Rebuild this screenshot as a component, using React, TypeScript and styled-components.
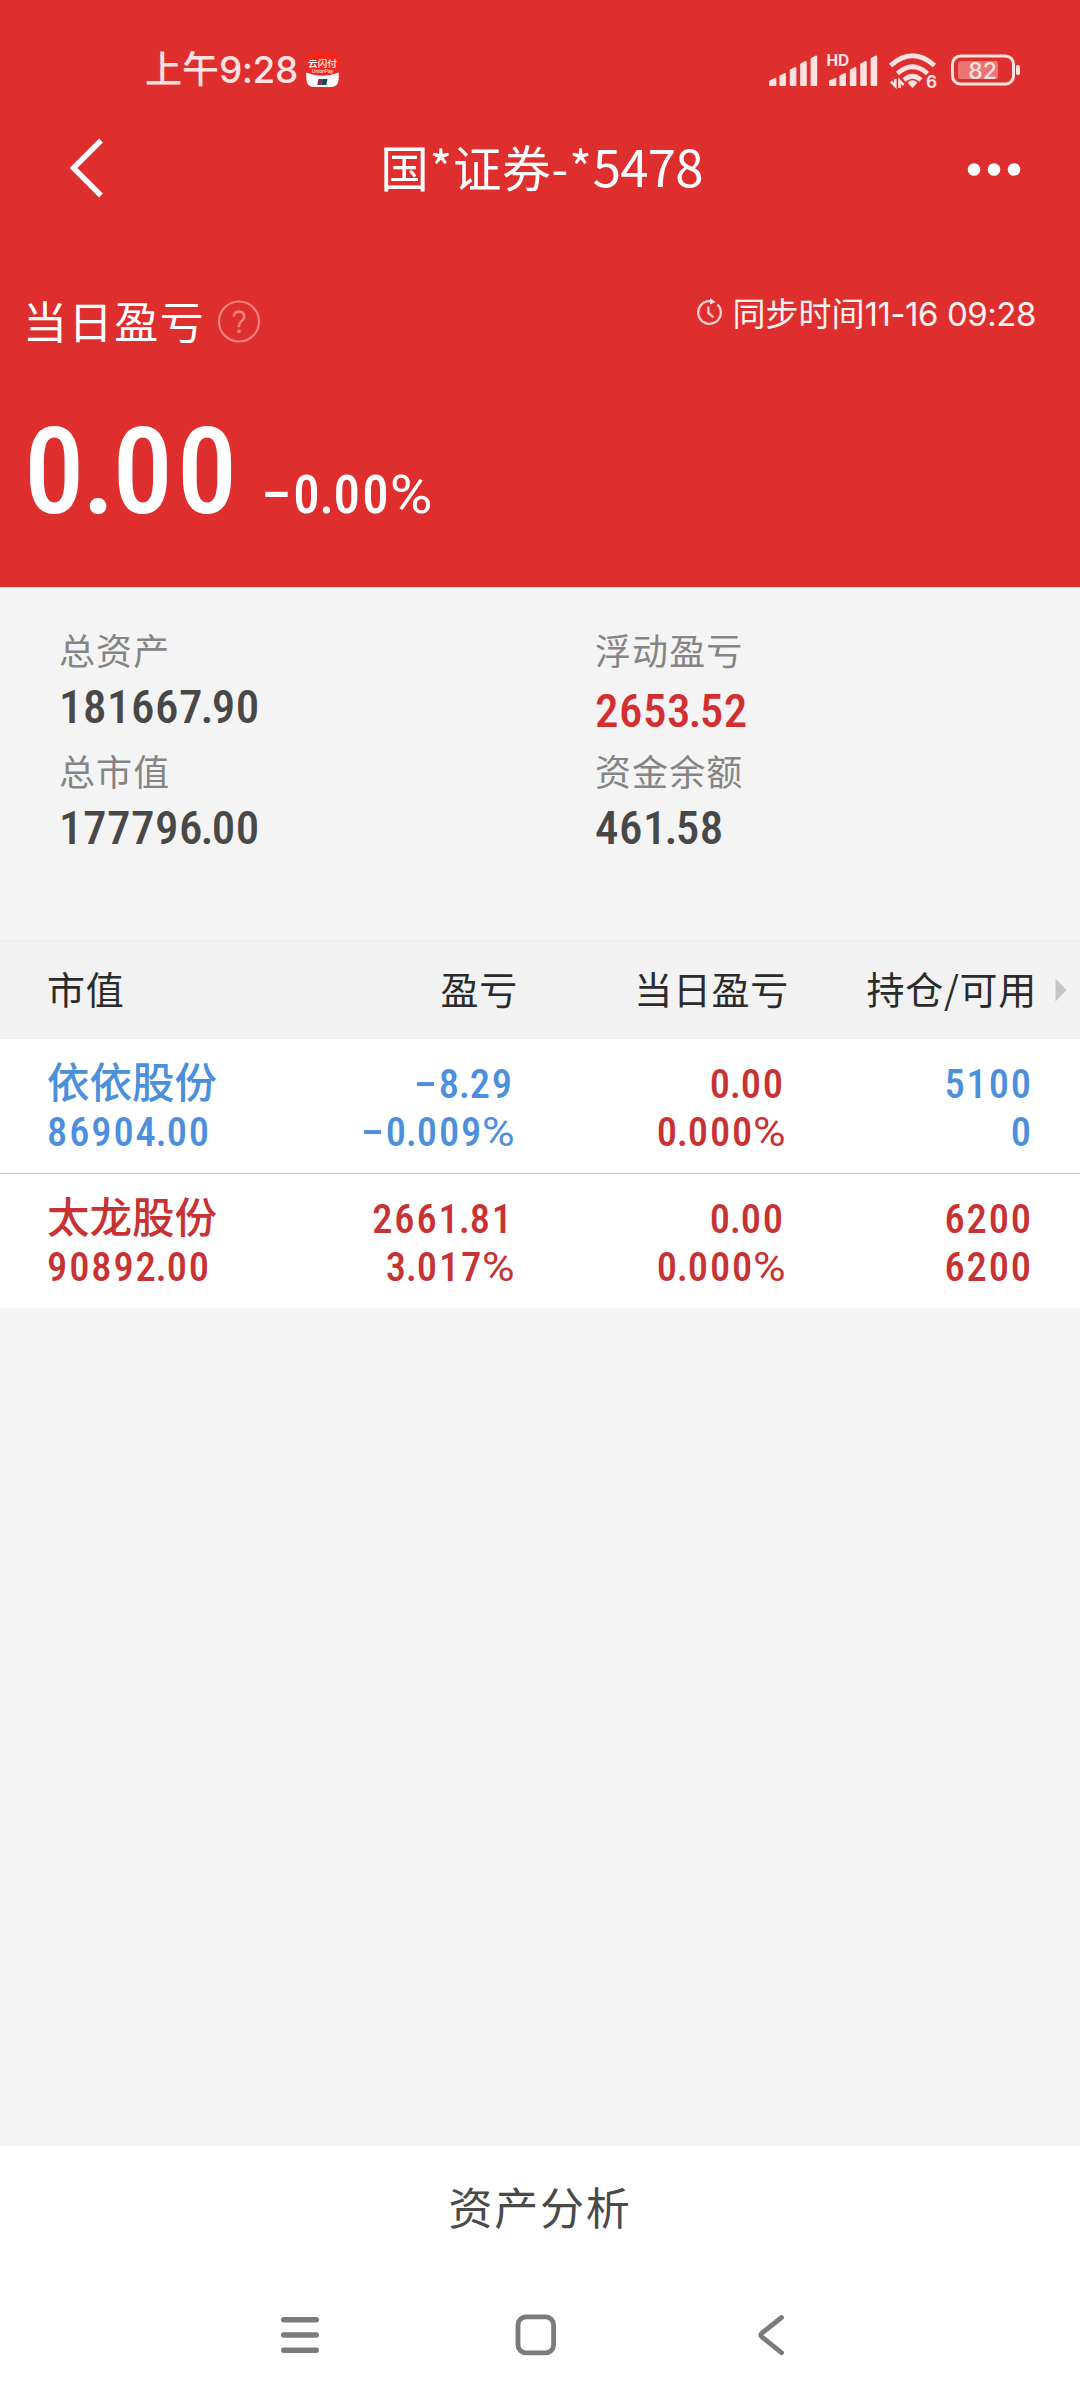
import React from 'react';
import styled, { createGlobalStyle } from 'styled-components';

const CJK = '"Noto Sans CJK SC", "Noto Sans", sans-serif';
const DIGITS = '"Roboto Condensed", Roboto, "Noto Sans CJK SC", sans-serif';

const tones = { up: '#c83232', down: '#4c8fdc' };
type Tone = keyof typeof tones;

const GlobalStyle = createGlobalStyle`
  * { box-sizing: border-box; }
  body { margin: 0; background: #f4f4f4; font-family: ${CJK}; }
`;

const Screen = styled.div`
  width: 1080px;
  height: 2400px;
  display: flex;
  flex-direction: column;
  background: #f4f4f4;
  overflow: hidden;
`;

/* ---------- numbers ---------- */

const Figure = styled.span`
  font-weight: 500;
  white-space: nowrap;
`;
const Dot = styled.span`
  margin: 0 -0.053em;
`;
const Minus = styled.span`
  display: inline-block;
  width: 0.63em;
  letter-spacing: 0;
  line-height: 1;
  text-align: center;
  transform: translateY(-0.045em) scaleX(1.9);
`;
const Percent = styled.span`
  display: inline-block;
  width: 0.76em;
  letter-spacing: 0;
  line-height: 1;
  font-family: Roboto, sans-serif;
  font-weight: 400;
  text-align: center;
  transform: scaleX(1.1);
`;

function Amount({ value }: { value: string }) {
  return (
    <Figure>
      {value.split(/([.%-])/).map((part, i) => {
        if (part === '.') return <Dot key={i}>.</Dot>;
        if (part === '-') return <Minus key={i}>-</Minus>;
        if (part === '%') return <Percent key={i}>%</Percent>;
        return part;
      })}
    </Figure>
  );
}

/* ---------- red header ---------- */

const Hero = styled.header`
  height: 587px;
  flex: none;
  display: flex;
  flex-direction: column;
  background: #df2e2e;
  color: #fff;
`;

const StatusBar = styled.div`
  height: 110px;
  padding: 43px 60px 0 145px;
  display: flex;
  justify-content: space-between;
  color: #ffe1e0;
`;
const StatusGroup = styled.div`
  display: flex;
  align-items: flex-start;
`;
const Clock = styled.div`
  font-size: 37px;
  font-weight: 500;
  line-height: 48px;
  margin-right: 7px;
  white-space: nowrap;
`;
const Latin = styled.span<{ $weight?: number }>`
  font-family: Inter, sans-serif;
  font-weight: ${p => p.$weight ?? 400};
  line-height: 1;
  letter-spacing: -0.45px;
`;
const AppBadge = styled.svg`
  display: block;
  margin-top: 9px;
`;
const StatusIcons = styled.svg`
  display: block;
`;

const TitleBar = styled.div`
  height: 120px;
  padding: 0 58px 0 65px;
  display: grid;
  grid-template-columns: 120px 1fr 120px;
  align-items: center;
`;
const Title = styled.h1`
  margin: 0 0 0 -4px;
  font-size: 48.5px;
  font-weight: 400;
  line-height: 60px;
  letter-spacing: 0.8px;
  text-align: center;
  white-space: nowrap;
  padding-bottom: 8px;
`;
const TitleDigits = styled.span`
  font-size: 51px;
  line-height: 1;
  letter-spacing: -0.8px;
`;
const BackChevron = styled.svg`
  display: block;
  margin-bottom: 4px;
`;
const MoreIcon = styled.svg`
  justify-self: end;
  display: block;
`;

const LabelRow = styled.div`
  height: 64px;
  margin-top: 60px;
  padding: 0 44px 0 23px;
  display: flex;
  justify-content: space-between;
`;
const DayLabel = styled.div`
  display: flex;
  align-items: center;
  gap: 12px;
  font-size: 44px;
  letter-spacing: 1.6px;
  line-height: 58px;
`;
const DayText = styled.span`
  margin-top: -5px;
`;
const SyncTime = styled.div`
  display: flex;
  align-items: center;
  height: 44px;
  gap: 9px;
  font-size: 33px;
  line-height: 40px;
  color: #fff3f2;
  white-space: nowrap;
`;
const HeroFigures = styled.div`
  display: flex;
  align-items: baseline;
  margin-top: 48px;
  padding-left: 24px;
  font-family: ${DIGITS};
`;
const DayProfit = styled.div`
  font-size: 121px;
  line-height: 140px;
  letter-spacing: 3.6px;
  margin-right: 19px;
`;
const DayRate = styled.div`
  font-size: 53px;
  line-height: 60px;
  letter-spacing: 2.3px;
`;

/* ---------- account summary ---------- */

const Summary = styled.section`
  height: 353px;
  flex: none;
  display: grid;
  grid-template-columns: 536px 1fr;
  padding: 41px 0 0 59px;
  align-content: start;
  border-top: 1px solid #f7efe9;
`;
const Stat = styled.div`
  height: 121px;
`;
const StatLabel = styled.div`
  font-size: 36px;
  line-height: 40px;
  letter-spacing: 1.1px;
  color: #858585;
`;
const StatValue = styled.div<{ $hot?: boolean }>`
  margin-top: ${p => (p.$hot ? 17 : 13)}px;
  font-family: ${DIGITS};
  font-size: 47px;
  line-height: 50px;
  letter-spacing: 0.5px;
  color: ${p => (p.$hot ? '#d42f30' : '#484848')};
`;

/* ---------- holdings ---------- */

const columns = '200px 267px 271px 248px';

const TableHead = styled.div`
  height: 99px;
  flex: none;
  display: grid;
  grid-template-columns: ${columns} 1fr;
  padding-left: 47px;
  background: #f2f2f2;
  border-top: 2px solid #ececec;
  border-bottom: 1px solid #ececec;
`;
const HeadCell = styled.div<{ $right?: boolean }>`
  font-size: 38px;
  letter-spacing: 0.7px;
  line-height: 91px;
  color: #2b2b2b;
  white-space: nowrap;
  text-align: ${p => (p.$right ? 'right' : 'left')};
  margin-right: -4px;
`;
const HeadArrow = styled.svg`
  display: block;
  margin: 36px 0 0 22px;
`;

const Row = styled.div`
  height: 135px;
  flex: none;
  display: grid;
  grid-template-columns: ${columns};
  padding: 21px 0 0 47px;
  background: #fff;
  border-bottom: 1px solid #c4c4c4;
  &:last-of-type { height: 134px; border-bottom: none; }
`;
const Cell = styled.div<{ $tone: Tone; $right?: boolean }>`
  color: ${p => tones[p.$tone]};
  text-align: ${p => (p.$right ? 'right' : 'left')};
`;
const Name = styled.div`
  height: 48px;
  font-size: 42.5px;
  font-weight: 500;
  line-height: 39px;
  white-space: nowrap;
`;
const Line = styled.div`
  height: 48px;
  font-family: ${DIGITS};
  font-size: 40.5px;
  line-height: 48px;
  letter-spacing: 1.9px;
`;
const Holdings = styled.main`
  flex: 1;
`;

/* ---------- bottom ---------- */

const Footer = styled.footer`
  height: 254px;
  flex: none;
  background: #fff;
`;
const Analysis = styled.div`
  height: 125px;
  font-size: 44px;
  letter-spacing: 1.8px;
  line-height: 121px;
  text-align: center;
  color: #4a4a4a;
`;
const SystemNav = styled.nav`
  height: 127px;
  display: flex;
  justify-content: space-between;
  align-items: center;
  padding: 0 294px 0 278px;
`;
const HomeIcon = styled.svg`
  margin-right: 6px;
`;

function BackIcon() {
  return (
    <BackChevron width="40" height="62" viewBox="0 0 40 62" fill="none" stroke="#fff" strokeWidth="5.4">
      <path d="M36 3.5 L8.5 31 L36 58.5" />
    </BackChevron>
  );
}

function Signal({ x }: { x: number }) {
  const tops = [78, 73, 67, 61, 55.5];
  return (
    <g>
      {tops.map((t, i) => {
        const l = x + i * 10.4;
        const w = i === 0 ? 7.4 : 6.6;
        return (
          <path
            key={t}
            strokeLinejoin="round"
            strokeWidth="2"
            stroke="#ffe1e0"
            d={`M${l + 1} ${t + 3.5} L${l + w - 1} ${t + 1} V85 H${l + 1} Z`}
          />
        );
      })}
    </g>
  );
}

const rows: { name: string; tone: Tone; cells: [Tone, string, string][]; worth: string }[] = [
  {
    name: '依依股份',
    worth: '86904.00',
    tone: 'down',
    cells: [['down', '-8.29', '-0.009%'], ['up', '0.00', '0.000%'], ['down', '5100', '0']],
  },
  {
    name: '太龙股份',
    worth: '90892.00',
    tone: 'up',
    cells: [['up', '2661.81', '3.017%'], ['up', '0.00', '0.000%'], ['up', '6200', '6200']],
  },
];

const stats = [
  { label: '总资产', value: '181667.90' },
  { label: '浮动盈亏', value: '2653.52', hot: true },
  { label: '总市值', value: '177796.00' },
  { label: '资金余额', value: '461.58' },
];

export default function App() {
  return (
    <Screen>
      <GlobalStyle />
      <Hero>
        <StatusBar>
          <StatusGroup>
            <Clock>上午<Latin $weight={500}>9:28</Latin></Clock>
            <AppBadge width="35" height="36" viewBox="0 0 35 36">
              <rect x="0.5" y="0.5" width="34" height="35" rx="8" fill="#f5261e" />
              <path d="M1 20.5 Q17.5 27 34 20.5 L33.5 28 Q33 35 26 35 H9 Q2 35 1.5 28 Z" fill="#fff" />
              <path d="M13.5 27 h4 l-1.2 6 h-4 z" fill="#8c2450" />
              <path d="M17.5 27 h5 l-1.2 6 h-5 z" fill="#0d4a57" />
              <text x="17.5" y="15" textAnchor="middle" fontFamily="Noto Sans CJK SC" fontSize="9.6" fontWeight="500" fill="#fff">云闪付</text>
              <text x="17.5" y="20.5" textAnchor="middle" fontFamily="Roboto" fontSize="5" fill="#fff">UnionPay</text>
            </AppBadge>
          </StatusGroup>
          <StatusIcons width="254" height="50" viewBox="766 43 254 50" fill="#ffe1e0">
            <Signal x={769} />
            <Signal x={829} />
            <text x="826.5" y="65.8" fontFamily="Inter" fontSize="15.5" fontWeight="700">HD</text>
            <g fill="none" stroke="#ffe1e0" strokeWidth="5">
              <path d="M890.5 65.5 Q912.5 46 934.5 65.5" />
              <path d="M897.5 73.5 Q912.5 60 927.5 73.5" />
              <path d="M904 80 Q912.5 72.5 921 80" strokeWidth="4.6" />
            </g>
            <path d="M907.5 82.5 Q912.5 78 917.5 82.5 L912.5 88 Z" />
            <g fill="none" stroke="#ffe1e0" strokeWidth="2.6">
              <path d="M891 81.5 L895.3 86 V79" />
              <path d="M899.5 88 V80.5 L903.6 85" />
            </g>
            <text x="926" y="88" fontFamily="Inter" fontSize="17" fontWeight="700">6</text>
            <rect x="952.5" y="56" width="61" height="28" rx="8" fill="none" stroke="#ffe1e0" strokeWidth="3" />
            <rect x="958" y="61" width="40" height="18" rx="2.5" fill="#ec7472" />
            <text x="982.5" y="78.7" textAnchor="middle" fontFamily="Inter" fontSize="23" fontWeight="500">82</text>
            <rect x="1016" y="65" width="4" height="10" rx="1.8" />
          </StatusIcons>
        </StatusBar>
        <TitleBar>
          <BackIcon />
          <Title>国*证券-*<TitleDigits>5478</TitleDigits></Title>
          <MoreIcon width="56" height="16" viewBox="0 0 56 16" fill="#fff">
            <circle cx="8" cy="7.5" r="6.3" />
            <circle cx="28" cy="7.5" r="6.3" />
            <circle cx="48" cy="7.5" r="6.3" />
          </MoreIcon>
        </TitleBar>
        <LabelRow>
          <DayLabel>
            <DayText>当日盈亏</DayText>
            <svg width="44" height="44" viewBox="0 0 44 44" fill="none" stroke="#f8807e">
              <circle cx="22" cy="21.5" r="20" strokeWidth="2.2" />
              <path d="M16.8 16.5 Q17.3 11.6 22 11.6 Q27.2 11.8 27.2 16.5 Q27.2 19 24.4 21.3 Q22 23.2 22 25.8 V27.3" strokeWidth="2.6" />
              <circle cx="22" cy="31.3" r="1.9" fill="#f8807e" stroke="none" />
            </svg>
          </DayLabel>
          <SyncTime>
            <svg width="28" height="28" viewBox="0 0 28 28" fill="none" stroke="#ffcfcd" strokeWidth="2.3">
              <path d="M22.3 6.3 A11.3 11.3 0 1 1 15 3.2" />
              <path d="M13.4 8.5 V15 L18.5 19.3" />
              <path d="M15 0 L20.5 4 L15 6.6 Z" fill="#ffe1e0" stroke="none" />
            </svg>
            <span>同步时间<Latin>11-16 09:28</Latin></span>
          </SyncTime>
        </LabelRow>
        <HeroFigures>
          <DayProfit><Amount value="0.00" /></DayProfit>
          <DayRate><Amount value="-0.00%" /></DayRate>
        </HeroFigures>
      </Hero>

      <Summary>
        {stats.map(s => (
          <Stat key={s.label}>
            <StatLabel>{s.label}</StatLabel>
            <StatValue $hot={s.hot}><Amount value={s.value} /></StatValue>
          </Stat>
        ))}
      </Summary>

      <Holdings>
        <TableHead>
          <HeadCell>市值</HeadCell>
          <HeadCell $right>盈亏</HeadCell>
          <HeadCell $right>当日盈亏</HeadCell>
          <HeadCell $right>持仓/可用</HeadCell>
          <HeadArrow width="12" height="24" viewBox="0 0 12 24">
            <path d="M0.5 0.5 L11.5 12 L0.5 23.5 Z" fill="#c6c6c6" />
          </HeadArrow>
        </TableHead>
        {rows.map(r => (
          <Row key={r.name}>
            <Cell $tone={r.tone}>
              <Name>{r.name}</Name>
              <Line><Amount value={r.worth} /></Line>
            </Cell>
            {r.cells.map(([tone, top, bottom], i) => (
              <Cell key={i} $tone={tone} $right>
                <Line><Amount value={top} /></Line>
                <Line><Amount value={bottom} /></Line>
              </Cell>
            ))}
          </Row>
        ))}
      </Holdings>

      <Footer>
        <Analysis>资产分析</Analysis>
        <SystemNav>
          <svg width="44" height="44" viewBox="0 0 44 44" stroke="#7b7b7b" strokeWidth="5.4" strokeLinecap="round">
            <path d="M5.7 6.7 H38.3 M5.7 22 H38.3 M5.7 37.3 H38.3" />
          </svg>
          <HomeIcon width="44" height="44" viewBox="0 0 44 44" fill="none" stroke="#7b7b7b" strokeWidth="4.8">
            <rect x="4" y="3.9" width="35.6" height="36" rx="8" />
          </HomeIcon>
          <svg width="30" height="44" viewBox="0 0 30 44" fill="none" stroke="#7b7b7b" strokeWidth="4.8" strokeLinecap="round" strokeLinejoin="round">
            <path d="M25.5 4.5 L6 20 Q3.6 22 6 24 L25.5 39.7" />
          </svg>
        </SystemNav>
      </Footer>
    </Screen>
  );
}
